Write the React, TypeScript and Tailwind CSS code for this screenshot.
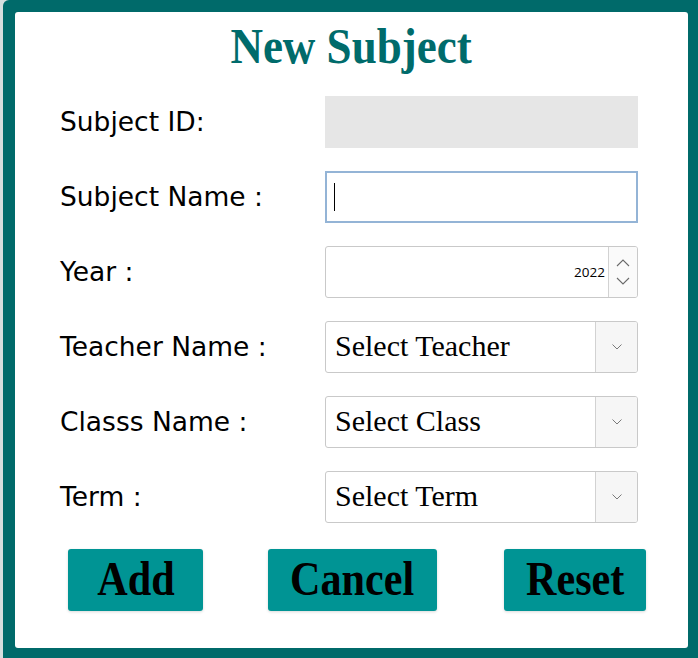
import React from 'react';

const labelFont = { fontFamily: '"DejaVu Sans", Verdana, sans-serif' };
const serif = { fontFamily: '"Liberation Serif", "Times New Roman", serif' };
const uiFont = { fontFamily: '"Open Sans", "Noto Sans", sans-serif' };

const Chevron: React.FC<{ up?: boolean }> = ({ up }) => (
  <svg width="14" height="8" viewBox="0 0 14 8">
    <path
      d={up ? 'M1 7 L7 1 L13 7' : 'M1 1 L7 7 L13 1'}
      fill="none"
      stroke="#6b6b6b"
      strokeWidth="1.1"
    />
  </svg>
);

const Row: React.FC<{ label: string; children: React.ReactNode }> = ({ label, children }) => (
  <div className="flex items-center h-[52px]">
    <div className="w-[265px] text-[26.5px] text-black leading-none" style={labelFont}>
      {label}
    </div>
    <div className="w-[313px] h-full">{children}</div>
  </div>
);

const SelectBox: React.FC<{ text: string }> = ({ text }) => (
  <div className="flex h-full border border-[#c9c9c9] rounded-[3px] bg-white overflow-hidden">
    <div className="flex-1 flex items-center pl-[9px] pb-[4px] text-[30px] text-black" style={serif}>
      {text}
    </div>
    <div className="w-[42px] flex items-center justify-center bg-[#f6f6f6] border-l border-[#d2d2d2]">
      <svg width="10" height="6" viewBox="0 0 10 6">
        <path d="M0.5 0.5 L5 5 L9.5 0.5" fill="none" stroke="#7a7a7a" strokeWidth="1" />
      </svg>
    </div>
  </div>
);

const Btn: React.FC<{ text: string; w: string }> = ({ text, w }) => (
  <button
    className={`${w} h-[62px] bg-[#009494] rounded-[3px] shadow-[0_1px_3px_rgba(0,0,0,0.15)] flex items-center justify-center`}
  >
    <span className="inline-block text-[49px] font-bold text-black leading-none scale-x-[0.86] pb-[4px]" style={serif}>
      {text}
    </span>
  </button>
);

export default function App() {
  return (
    <div className="w-[698px] h-[658px] flex bg-[#d6dede]">
      <div className="w-[3px]" />
      <div className="flex-1 bg-[#006a6a] rounded-tl-[6px] pt-[12px] pl-[12px] pr-[10px] pb-[10px]">
        <div className="w-full h-full bg-white rounded-[3px] flex flex-col">
          <div className="h-[84px] flex justify-center pt-[9px]">
            <h1
              className="text-[50px] font-bold text-[#006b6b] leading-none inline-block scale-x-[0.9]"
              style={serif}
            >
              New Subject
            </h1>
          </div>
          <div className="flex flex-col gap-[23px] pl-[45px]">
            <Row label="Subject ID:">
              <div className="h-full bg-[#e6e6e6]" />
            </Row>
            <Row label="Subject Name :">
              <div className="h-full border-2 border-[#94b4d6] bg-white flex items-center pl-[7px]">
                <div className="w-px h-[28px] bg-black" />
              </div>
            </Row>
            <Row label="Year :">
              <div className="flex h-full border border-[#c9c9c9] rounded-[3px] bg-white overflow-hidden">
                <div
                  className="flex-1 flex items-center justify-end pr-[3px] text-[13.5px] text-black"
                  style={uiFont}
                >
                  2022
                </div>
                <div className="w-[29px] flex flex-col items-center justify-center gap-[10px] bg-[#fafafa] border-l border-[#d2d2d2]">
                  <Chevron up />
                  <Chevron />
                </div>
              </div>
            </Row>
            <Row label="Teacher Name :">
              <SelectBox text="Select Teacher" />
            </Row>
            <Row label="Classs Name :">
              <SelectBox text="Select Class" />
            </Row>
            <Row label="Term :">
              <SelectBox text="Select Term" />
            </Row>
          </div>
          <div className="flex pl-[53px] pt-[26px] gap-[65px]">
            <Btn text="Add" w="w-[135px]" />
            <Btn text="Cancel" w="w-[169px]" />
            <div className="w-px -ml-[64px]" />
            <Btn text="Reset" w="w-[142px]" />
          </div>
        </div>
      </div>
    </div>
  );
}
